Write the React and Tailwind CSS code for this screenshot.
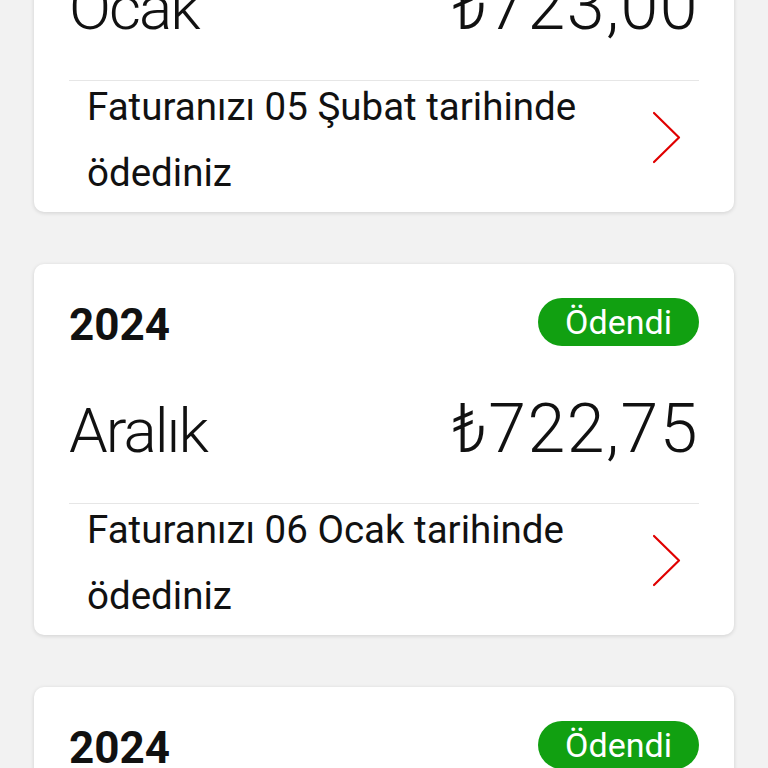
import React from "react";

function Chevron() {
  return (
    <svg width="29" height="53" viewBox="0 0 29 53" fill="none">
      <polyline points="2,2 27,26.5 2,51" stroke="#e00000" strokeWidth="2.2" strokeLinecap="round" strokeLinejoin="round" />
    </svg>
  );
}

function Card({ year, month, amount, text1, text2 }) {
  return (
    <div className="rounded-[10px] bg-white shadow-[0_1px_4px_rgba(0,0,0,0.14)] px-[35px] pt-[34px]">
      <div className="flex h-[48px] items-center justify-between">
        <span className="mt-[6px] text-[44px] font-bold leading-none text-[#111]">{year}</span>
        <span className="flex h-[48px] w-[161px] items-center justify-center rounded-full bg-[#11a011] text-[34px] leading-none text-white">
          Ödendi
        </span>
      </div>
      <div className="mt-[54px] flex h-[62px] items-baseline justify-between font-light text-[#111]">
        <span className="text-[62px] leading-[62px] tracking-[-2px]">{month}</span>
        <span className="text-[68px] leading-[58px] tracking-[1.5px]">{amount}</span>
      </div>
      <div className="mt-[41px] border-t border-[#e6e6e6]" />
      <div className="flex h-[131px] items-start justify-between px-[18px]">
        <div className="-mt-[7px] text-[38.5px] leading-[66px] text-[#111]">
          <div>{text1}</div>
          <div>{text2}</div>
        </div>
        <div className="mt-[30px]">
          <Chevron />
        </div>
      </div>
    </div>
  );
}

export default function App() {
  return (
    <div className="h-[768px] overflow-hidden bg-[#f2f2f2] font-[Roboto,sans-serif]">
      <div className="-mt-[159px] flex flex-col gap-[52px] px-[34px]">
        <Card year="2025" month="Ocak" amount="₺723,00" text1="Faturanızı 05 Şubat tarihinde" text2="ödediniz" />
        <Card year="2024" month="Aralık" amount="₺722,75" text1="Faturanızı 06 Ocak tarihinde" text2="ödediniz" />
        <Card year="2024" month="Kasım" amount="₺722,75" text1="Faturanızı 05 Aralık tarihinde" text2="ödediniz" />
      </div>
    </div>
  );
}
